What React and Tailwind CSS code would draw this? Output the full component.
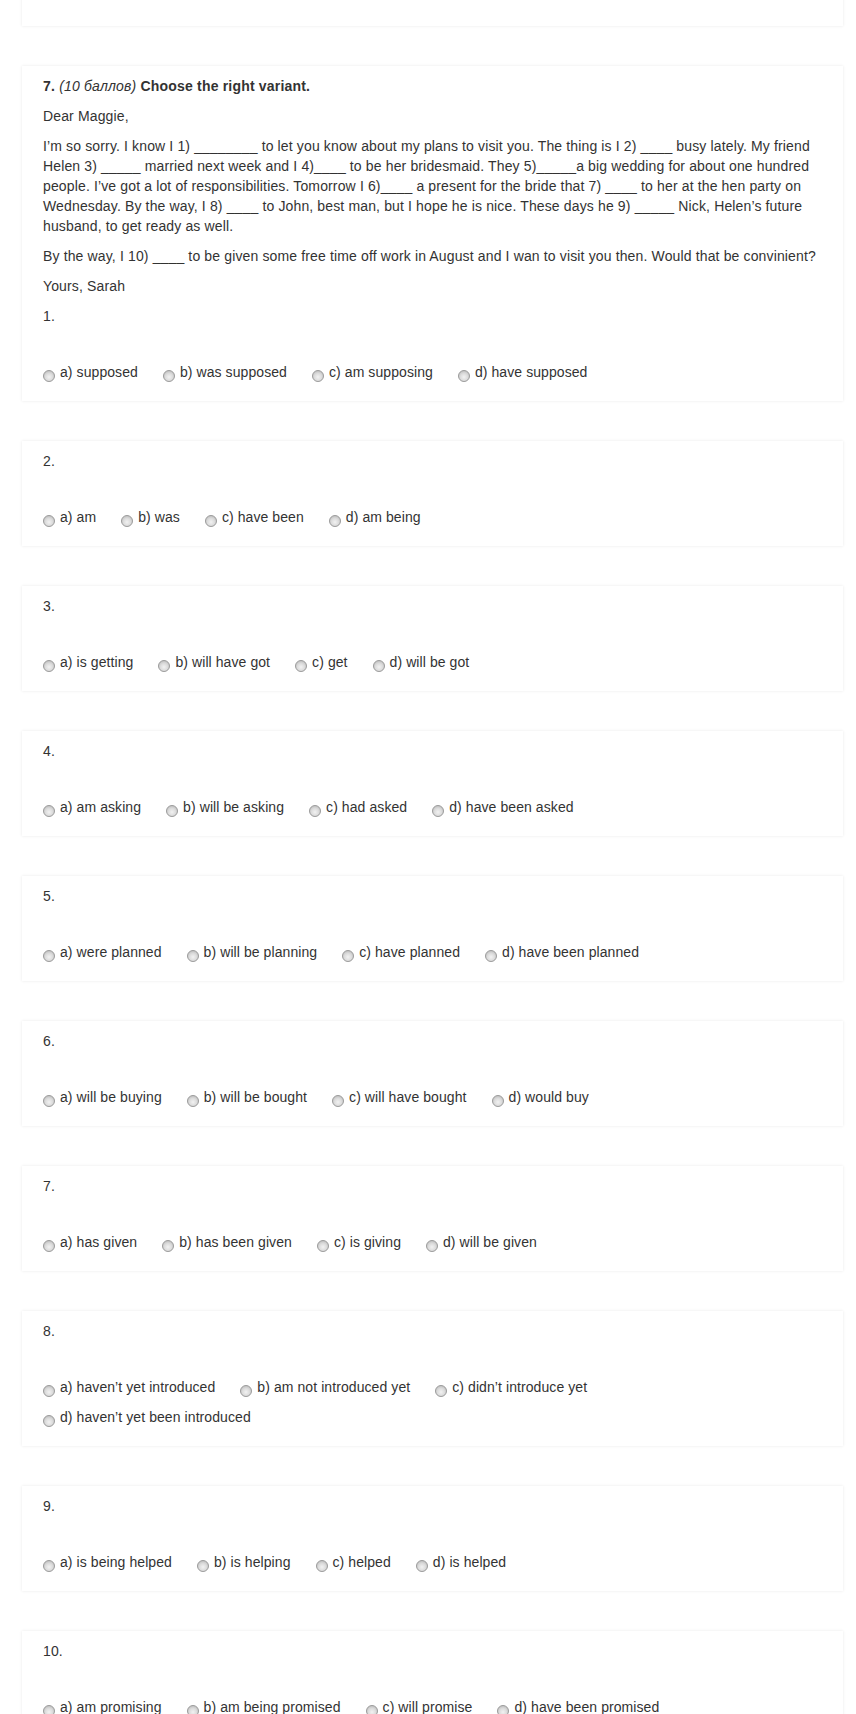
import React from "react";

const font = { fontFamily: '"Liberation Sans", Arial, sans-serif' };

function Radio() {
  return (
    <svg width="12" height="12" viewBox="0 0 12 12" className="shrink-0 mt-[7px]">
      <defs>
        <radialGradient id="rg" cx="50%" cy="60%" r="60%">
          <stop offset="0%" stopColor="#f2f2f2" />
          <stop offset="55%" stopColor="#dcdcdc" />
          <stop offset="100%" stopColor="#bdbdbd" />
        </radialGradient>
      </defs>
      <circle cx="6" cy="6" r="5.5" fill="url(#rg)" stroke="#9c9c9c" strokeWidth="1" />
    </svg>
  );
}

function Options({ items, breakBefore }) {
  return (
    <div className="flex flex-wrap gap-x-[25px] tracking-[0.08px]">
      {items.map((t, i) => (
        <React.Fragment key={t}>
          {breakBefore === i && <div className="basis-full h-0" />}
          <label className="flex items-center h-[30px] gap-[5px] whitespace-nowrap">
            <Radio />
            <span>{t}</span>
          </label>
        </React.Fragment>
      ))}
    </div>
  );
}

const questions = [
  ["a) supposed", "b) was supposed", "c) am supposing", "d) have supposed"],
  ["a) am", "b) was", "c) have been", "d) am being"],
  ["a) is getting", "b) will have got", "c) get", "d) will be got"],
  ["a) am asking", "b) will be asking", "c) had asked", "d) have been asked"],
  ["a) were planned", "b) will be planning", "c) have planned", "d) have been planned"],
  ["a) will be buying", "b) will be bought", "c) will have bought", "d) would buy"],
  ["a) has given", "b) has been given", "c) is giving", "d) will be given"],
  ["a) haven’t yet introduced", "b) am not introduced yet", "c) didn’t introduce yet", "d) haven’t yet been introduced"],
  ["a) is being helped", "b) is helping", "c) helped", "d) is helped"],
  ["a) am promising", "b) am being promised", "c) will promise", "d) have been promised"],
];

function Card({ children }) {
  return (
    <div className="bg-white shadow-[0_0_3px_rgba(0,0,0,0.09)] pt-[10px] pb-[14px] px-[21px]">
      {children}
    </div>
  );
}

export default function App() {
  return (
    <div
      className="h-[1714px] overflow-hidden bg-white text-[#333] text-[14px] leading-[20px] tracking-[0.14px]"
      style={font}
    >
      <div className="pl-[22px] pr-[13px] flex flex-col gap-[40px]">
        <div className="bg-white shadow-[0_0_3px_rgba(0,0,0,0.09)] h-[46px] -mt-[20px]" />

        <Card>
          <p className="mb-[10px] tracking-[0.19px]">
            <b>7.</b> <i>(10 баллов)</i> <b>Choose the right variant.</b>
          </p>
          <p className="mb-[10px]">Dear Maggie,</p>
          <p className="mb-[10px]">
            I’m so sorry. I know I 1) ________ to let you know about my plans to visit you. The thing is I 2) ____ busy lately. My friend Helen 3) _____ married next week and I 4)____ to be her bridesmaid. They 5)_____a big wedding for about one hundred people. I’ve got a lot of responsibilities. Tomorrow I 6)____ a present for the bride that 7) ____ to her at the hen party on Wednesday. By the way, I 8) ____ to John, best man, but I hope he is nice. These days he 9) _____ Nick, Helen’s future husband, to get ready as well.
          </p>
          <p className="mb-[10px]">
            By the way, I 10) ____ to be given some free time off work in August and I wan to visit you then. Would that be convinient?
          </p>
          <p className="mb-[10px]">Yours, Sarah</p>
          <p className="mb-[31px]">1.</p>
          <Options items={questions[0]} />
        </Card>

        {questions.slice(1).map((q, i) => (
          <Card key={i}>
            <p className="mb-[31px]">{i + 2}.</p>
            <Options items={q} breakBefore={i + 2 === 8 ? 3 : undefined} />
          </Card>
        ))}
      </div>
    </div>
  );
}
